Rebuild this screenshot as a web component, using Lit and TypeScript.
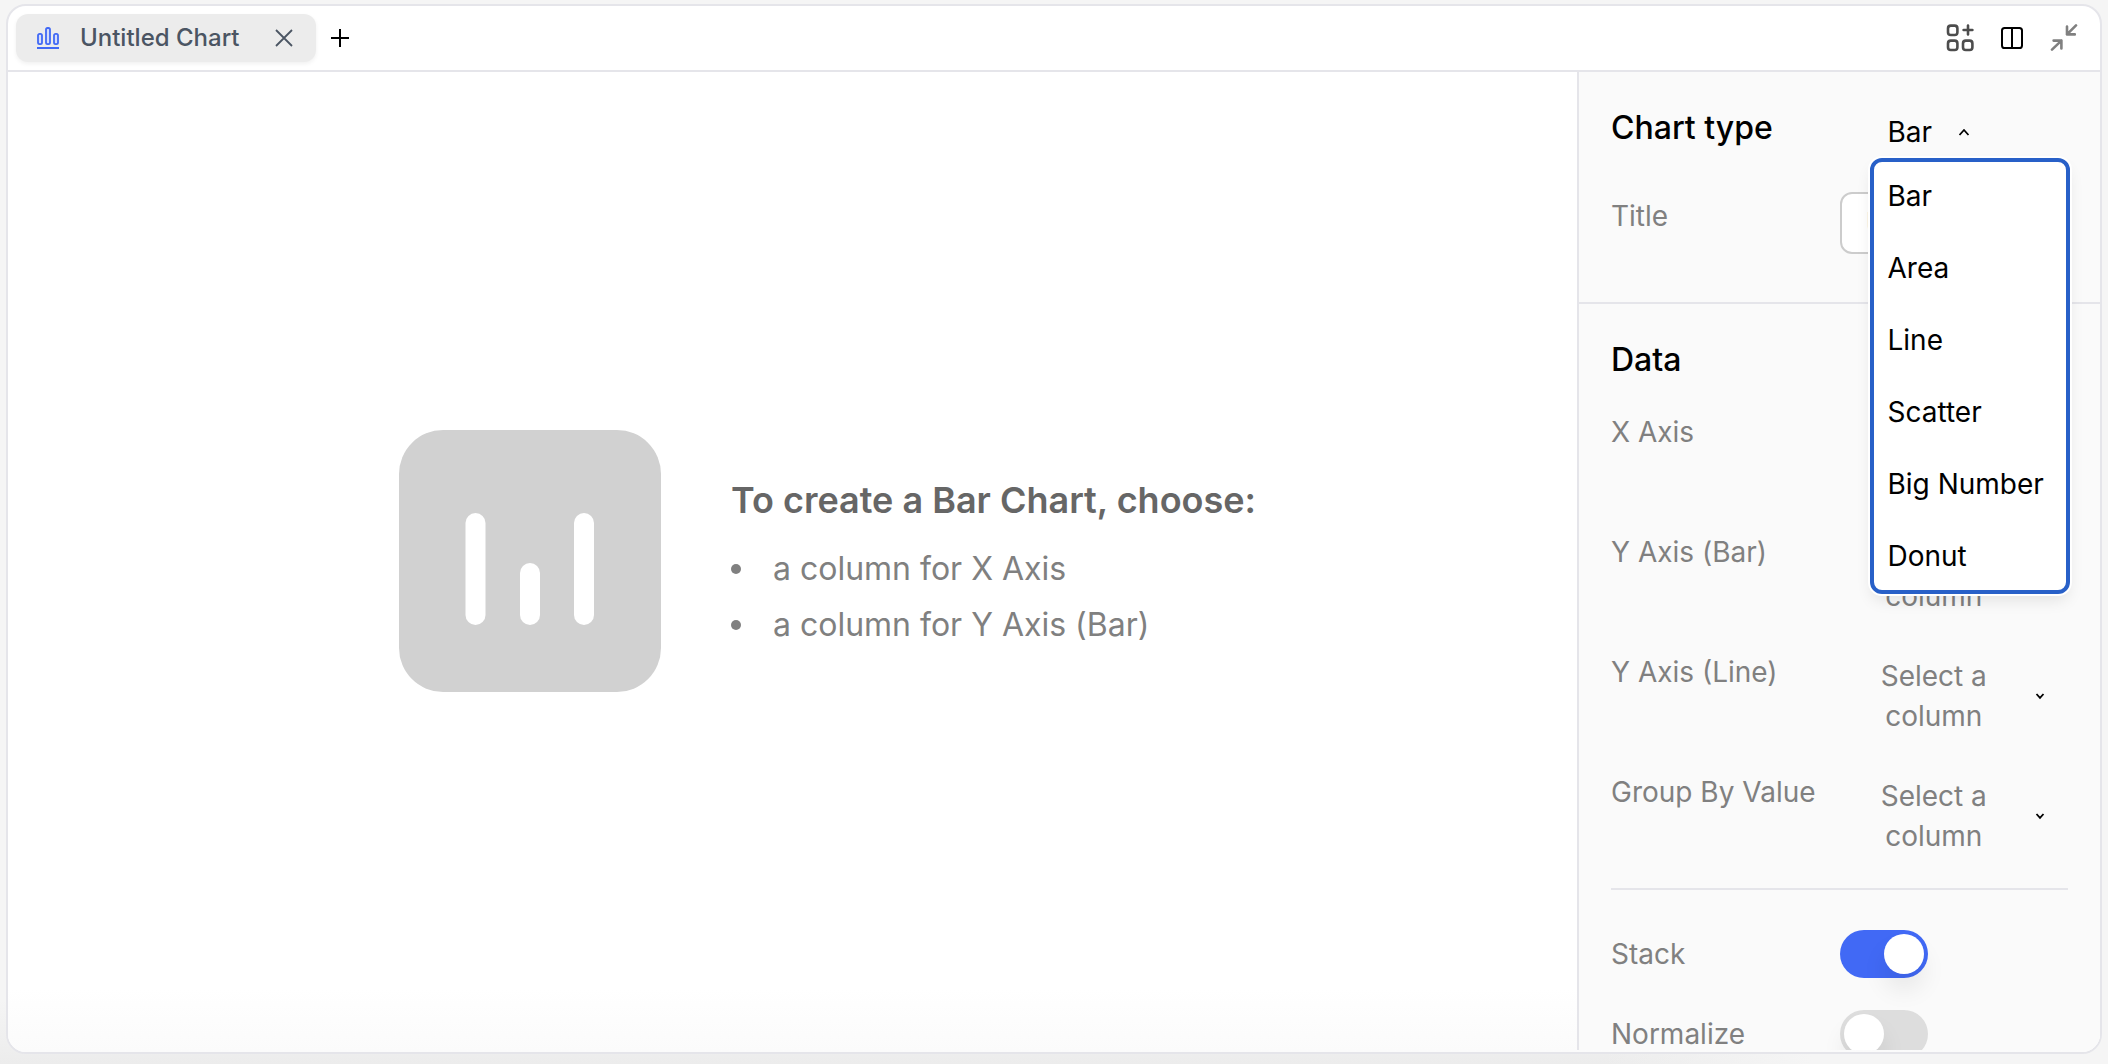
import { LitElement, html, css, svg } from "lit";
import { customElement, state } from "lit/decorators.js";

const CHART_TYPES = ["Bar", "Area", "Line", "Scatter", "Big Number", "Donut"];
const AXES = ["X Axis", "Y Axis (Bar)", "Y Axis (Line)", "Group By Value"];

const chevron = (up: boolean) => svg`
  <path d=${up ? "M3.5 11 L8 6 L12.5 11" : "M4.5 6 L8 9.8 L11.5 6"} fill="none" stroke="currentColor" stroke-width="1.8" />`;

@customElement("app-root")
export class AppRoot extends LitElement {
  @state() private open = true;
  @state() private type = "Bar";
  @state() private stack = true;
  @state() private normalize = false;

  static styles = css`
    :host {
      display: block;
      height: 100vh;
      box-sizing: border-box;
      padding: 4px 6px 10px;
      background:
        linear-gradient(to right, rgba(245, 245, 245, 0) 76%, #f5f5f5 86%),
        linear-gradient(to bottom, #f5f5f5 calc(100% - 64px), #ececec);
      font-family: Inter, "Liberation Sans", sans-serif;
      color: #000;
    }
    * { box-sizing: border-box; }
    button {
      font: inherit;
      color: inherit;
      background: none;
      border: 0;
      margin: 0;
      padding: 0;
      cursor: pointer;
    }
    svg { display: block; flex: none; }
    h1, h2, ul { margin: 0; padding: 0; list-style: none; }
    .frame {
      height: 100%;
      display: flex;
      flex-direction: column;
      background: #fff;
      border: 2px solid #e5e5ea;
      border-radius: 20px;
      overflow: hidden;
    }
    .header {
      flex: none;
      display: flex;
      align-items: center;
      height: 66px;
      padding: 0 22px 0 8px;
      border-bottom: 2px solid #e5e5ea;
    }
    .tab {
      display: flex;
      align-items: center;
      height: 48px;
      padding: 0 20px;
      border-radius: 12px;
      background: #ececec;
      box-shadow: 0 2px 4px rgba(0, 0, 0, 0.06);
      color: #4b5563;
      font-size: 24px;
      font-weight: 500;
      line-height: 32px;
    }
    .tab-name { padding: 0 32px 0 20px; }
    .add { margin-left: 12px; }
    .tools { display: flex; gap: 24px; margin-left: auto; }
    .body {
      flex: 1;
      min-height: 0;
      display: flex;
      padding-bottom: 2px;
      background: linear-gradient(to bottom, #fff calc(100% - 64px), #fbfbfb);
    }
    .canvas {
      flex: 1;
      display: flex;
      align-items: center;
      justify-content: center;
      gap: 70px;
      padding-left: 70px;
    }
    .hint h1 {
      margin-bottom: 10px;
      font-size: 36px;
      font-weight: 600;
      line-height: 62px;
      color: #666;
    }
    .hint li {
      display: flex;
      align-items: center;
      gap: 32px;
      font-size: 32px;
      line-height: 56px;
      color: #808080;
    }
    .hint li::before {
      content: "";
      width: 10px;
      height: 10px;
      border-radius: 50%;
      background: #808080;
    }
    .side {
      width: 25%;
      overflow: hidden;
      border-left: 2px solid #e5e5ea;
      background: #fafafa;
      font-size: 28px;
      line-height: 40px;
    }
    .section { padding: 32px 32px 48px; }
    .section + .section { border-top: 2px solid #e5e5ea; }
    .section h2 {
      font-size: 32px;
      font-weight: 500;
      line-height: 48px;
    }
    .row {
      display: grid;
      grid-template-columns: 1fr 1fr;
      align-items: start;
    }
    .label { color: #808080; line-height: 48px; }
    .picker { position: relative; margin-left: 32px; }
    .current {
      display: flex;
      align-items: center;
      gap: 24px;
      height: 56px;
      padding: 0 16px;
    }
    .menu {
      position: absolute;
      z-index: 1;
      top: 100%;
      left: 0;
      right: 0;
      background: #fff;
      border-radius: 10px;
      outline: 4px solid #2860c8;
      outline-offset: -2px;
      box-shadow: 0 0 0 4px #fff, 0 8px 16px rgba(0, 0, 0, 0.1);
    }
    .option {
      display: block;
      width: 100%;
      height: 72px;
      padding: 0 16px;
      text-align: left;
      white-space: nowrap;
    }
    .title-row { margin-top: 32px; }
    .title-input {
      width: 100%;
      height: 62px;
      padding: 0 24px;
      border: 2px solid #ccc;
      border-radius: 12px;
      background: #fff;
      font: inherit;
    }
    .title-input::placeholder { color: #ccc; opacity: 1; }
    .axes {
      display: grid;
      gap: 32px;
      padding: 24px 0 32px;
      border-bottom: 2px solid #e5e5ea;
    }
    .column {
      display: flex;
      align-items: center;
      gap: 36px;
      width: 100%;
      padding: 8px 20px 0 32px;
    }
    .column span { flex: 1; color: #808080; }
    .toggles { display: grid; gap: 32px; padding-top: 40px; }
    .toggle {
      appearance: none;
      width: 88px;
      height: 48px;
      margin: 0;
      padding: 4px;
      border-radius: 24px;
      background: #ddd;
      cursor: pointer;
    }
    .toggle::before {
      content: "";
      display: block;
      width: 40px;
      height: 40px;
      border-radius: 50%;
      background: #fff;
      box-shadow: 0 16px 24px rgba(0, 0, 0, 0.08);
    }
    .toggle:checked { background: #4169f5; }
    .toggle:checked::before { margin-left: auto; }
  `;

  private choose(type: string) {
    this.type = type;
    this.open = false;
  }

  render() {
    return html`
      <div class="frame">
        <header class="header">
          <div class="tab">
            <svg width="24" height="24" viewBox="0 0 24 24" fill="#d5ddfb" stroke="#4169f5" stroke-width="1.8">
              <rect x="2" y="7.8" width="4" height="10.4" rx="1.6" />
              <rect x="10" y="2" width="4" height="16.2" rx="1.6" />
              <rect x="18" y="7.8" width="4" height="10.4" rx="1.6" />
              <path d="M1 22 H23" stroke-width="2" />
            </svg>
            <span class="tab-name">Untitled Chart</span>
            <button aria-label="Close tab">
              <svg width="24" height="24" viewBox="0 0 24 24" stroke="currentColor" stroke-width="1.8">
                <path d="M4 4 L20 20 M20 4 L4 20" />
              </svg>
            </button>
          </div>
          <button class="add" aria-label="New tab">
            <svg width="24" height="24" viewBox="0 0 24 24" stroke="#000" stroke-width="2">
              <path d="M12 3 V21 M3 12 H21" />
            </svg>
          </button>
          <div class="tools">
            <button aria-label="Add to dashboard">
              <svg width="28" height="28" viewBox="0 0 28 28" fill="none" stroke="#4d4d4d" stroke-width="2.6">
                <rect x="2" y="1.6" width="9.4" height="9.4" rx="2.8" />
                <rect x="2" y="16.6" width="9.4" height="9.4" rx="2.8" />
                <rect x="17" y="16.6" width="9.4" height="9.4" rx="2.8" />
                <path d="M22 1.6 V10.4 M17.6 6 H26.4" stroke-linecap="round" />
              </svg>
            </button>
            <button aria-label="Split view">
              <svg width="28" height="28" viewBox="0 0 28 28" fill="none" stroke="#000" stroke-width="2">
                <rect x="4" y="4" width="20" height="20" rx="2.6" />
                <path d="M14 4 V24" />
              </svg>
            </button>
            <button aria-label="Collapse">
              <svg width="28" height="28" viewBox="0 0 28 28" fill="none" stroke="#808080" stroke-width="2.6" stroke-linecap="round" stroke-linejoin="round">
                <path d="M26 1.4 L17 10.4 M17 2.6 V10.4 H24.8 M2 25.6 L11.4 16.6 M3.6 16.6 H11.4 V24.4" />
              </svg>
            </button>
          </div>
        </header>
        <div class="body">
          <main class="canvas">
            <svg width="262" height="262" viewBox="0 0 262 262">
              <rect width="262" height="262" rx="44" fill="#d1d1d1" />
              <g fill="#fff">
                <rect x="66.5" y="83" width="20" height="112" rx="10" />
                <rect x="121" y="133" width="20" height="62" rx="10" />
                <rect x="175" y="83" width="20" height="112" rx="10" />
              </g>
            </svg>
            <div class="hint">
              <h1>To create a ${this.type} Chart, choose:</h1>
              <ul>
                <li>a column for X Axis</li>
                <li>a column for Y Axis (Bar)</li>
              </ul>
            </div>
          </main>
          <aside class="side">
            <section class="section">
              <div class="row">
                <h2 id="type-label">Chart type</h2>
                <div class="picker">
                  <button
                    class="current"
                    aria-haspopup="listbox"
                    aria-expanded=${this.open}
                    @click=${() => (this.open = !this.open)}
                  >
                    ${this.type}
                    <svg width="16" height="16" viewBox="0 0 16 16">${chevron(this.open)}</svg>
                  </button>
                  ${this.open
                    ? html`<div class="menu" role="listbox" aria-labelledby="type-label">
                        ${CHART_TYPES.map(
                          (t) => html`<button
                            class="option"
                            role="option"
                            aria-selected=${t === this.type}
                            @click=${() => this.choose(t)}
                          >${t}</button>`
                        )}
                      </div>`
                    : null}
                </div>
              </div>
              <div class="row title-row">
                <label class="label" for="title">Title</label>
                <input class="title-input" id="title" type="text" placeholder="Untitled" />
              </div>
            </section>
            <section class="section">
              <h2>Data</h2>
              <div class="axes">
                ${AXES.map(
                  (name, i) => html`<div class="row">
                    <label class="label" for="axis-${i}">${name}</label>
                    <button class="column" id="axis-${i}" aria-haspopup="listbox">
                      <span>Select a column</span>
                      <svg width="16" height="16" viewBox="0 0 16 16">${chevron(false)}</svg>
                    </button>
                  </div>`
                )}
              </div>
              <div class="toggles">
                <div class="row">
                  <label class="label" for="stack">Stack</label>
                  <input
                    class="toggle" id="stack" type="checkbox" role="switch"
                    .checked=${this.stack}
                    @change=${() => (this.stack = !this.stack)}
                  />
                </div>
                <div class="row">
                  <label class="label" for="normalize">Normalize</label>
                  <input
                    class="toggle" id="normalize" type="checkbox" role="switch"
                    .checked=${this.normalize}
                    @change=${() => (this.normalize = !this.normalize)}
                  />
                </div>
              </div>
            </section>
          </aside>
        </div>
      </div>
    `;
  }
}
